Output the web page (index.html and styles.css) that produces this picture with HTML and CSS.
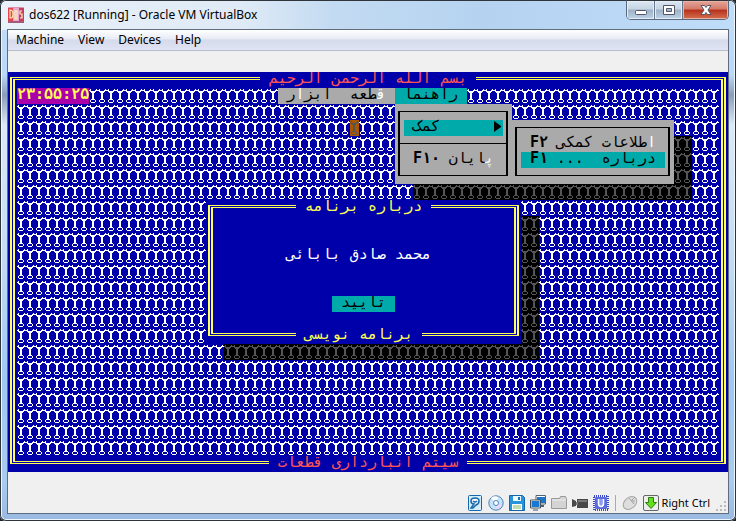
FILE: index.html
```html
<!DOCTYPE html>
<html lang="en">
<head>
<meta charset="utf-8">
<title>dos622 [Running] - Oracle VM VirtualBox</title>
<link rel="stylesheet" href="styles.css">
</head>
<body>
<svg class="defs" aria-hidden="true">
  <defs>
    <path id="glyph" d="M1 1h1v1h-1zM7 1h1v1h-1zM0 2h2v1h-2zM6 2h3v1h-3zM1 3h6v1h-6zM2 4h1v1h-1zM3 4h2v7h-2zM5 4h1v1h-1zM2 11h4v1h-4zM1 12h1v2h-1zM6 12h1v2h-1zM2 14h4v1h-4z"/>
    <pattern id="tile-white" width="9" height="16" patternUnits="userSpaceOnUse"><use href="#glyph" fill="#fff"/></pattern>
    <pattern id="tile-gray" width="9" height="16" patternUnits="userSpaceOnUse"><use href="#glyph" fill="#555"/></pattern>
  </defs>
</svg>
<div class="window">
  <header class="titlebar">
    <svg class="app-icon" width="16" height="16" viewBox="0 0 16 16" aria-hidden="true">
      <rect width="16" height="16" rx="1" fill="#d995ae"/><path d="M0 1h5v13H0z" fill="#e8434a"/><path d="M11 1h5v14h-5z" fill="#c83f60"/><path d="M5 1h6v14H5z" fill="#e7a8d0"/>
      <path d="M2 3v8h1q2 0 2-4T2 3zM7 4h2v8H7zM14 4h-2v3h2v4h-2" fill="none" stroke="#fff0b8" stroke-width="1.2"/><path d="M0 14h16v2H0z" fill="#a55a78"/>
    </svg>
    <h1 class="title">dos622 [Running] - Oracle VM VirtualBox</h1>
    <div class="controls">
      <button class="control" aria-label="Minimize"><svg width="14" height="14" viewBox="0 0 14 14"><rect x="1.500" y="7.500" width="11" height="4" rx="1" fill="#fff" stroke="#535666"/></svg></button>
      <button class="control" aria-label="Maximize"><svg width="14" height="14" viewBox="0 0 14 14"><path d="M1.500 2.500h11v9h-11zM4.500 5.500v3h5v-3z" fill="#fff" fill-rule="evenodd" stroke="#535666"/></svg></button>
      <button class="control close" aria-label="Close"><svg width="14" height="14" viewBox="0 0 14 14"><path d="M2 2.500h3.500L7 4.500l1.500-2H12L9 7l3 4.500H8.500L7 9.500l-1.500 2H2L5 7z" fill="#fff" stroke="#535666"/></svg></button>
    </div>
  </header>
  <div class="client">
    <nav class="app-menu">
      <button>Machine</button><button>View</button><button>Devices</button><button>Help</button>
    </nav>
    <main class="screen" lang="fa">
      <div class="frame main-frame"><div class="frame-inner"></div></div>
      <svg class="pattern desktop"><rect width="100%" height="100%" fill="url(#tile-white)"/></svg>
      <h2 class="caption top-caption">بسم الله الرحمن الرحیم</h2>
      <time class="clock">۲۳:۵۵:۲۵</time>
      <div class="cursor"><svg class="pattern"><rect width="100%" height="100%" fill="url(#tile-gray)"/></svg></div>
      <nav class="dos-menu">
        <button class="active">راهنما</button>
        <button><span class="hot">ق</span>طعه</button>
        <button>ابز<span class="hot">ا</span>ر</button>
      </nav>

      <div class="shadow menu-shadow"><svg class="pattern"><rect width="100%" height="100%" fill="url(#tile-gray)"/></svg></div>
      <div class="shadow submenu-shadow"><svg class="pattern"><rect width="100%" height="100%" fill="url(#tile-gray)"/></svg></div>
      <div class="shadow dialog-shadow"><svg class="pattern"><rect width="100%" height="100%" fill="url(#tile-gray)"/></svg></div>

      <div class="popup help-menu">
        <div class="popup-box"></div>
        <button class="entry selected"><span>کمک</span><svg width="9" height="16" viewBox="0 0 9 16"><path d="M0 1v11l7-5v-1z"/></svg></button>
        <hr class="divider">
        <button class="entry last"><span class="key">F۱۰</span><span><span class="hot">پ</span>ایان</span></button>
      </div>
      <div class="popup sub-menu">
        <div class="popup-box"></div>
        <button class="entry"><span class="key">F۲</span><span><span class="hot">ا</span>طلاعات کمکی</span></button>
        <button class="entry selected"><span class="key">F۱</span><span>درباره&nbsp; ...</span></button>
      </div>

      <section class="dialog" role="dialog" aria-labelledby="about-title">
        <div class="frame"><div class="frame-inner"></div></div>
        <h2 class="caption dialog-title" id="about-title">درباره برنامه</h2>
        <p class="author">محمد صادق بابائی</p>
        <button class="confirm">تایید</button>
        <p class="caption dialog-foot">برنامه نویسی</p>
      </section>
      <p class="caption bottom-caption">سیتم انبارداری قطعات</p>
    </main>
    <footer class="status">
      <svg viewBox="0 0 16 16"><rect x="1.500" y=".5" width="13" height="15" rx="1" fill="#d5edfc" stroke="#1768ab"/><path d="M4 6q0-3 4-3t4 3q0 3-3 4l-3 3H4l3-4Q4 9 4 6zM6 6q2 2 4 0" fill="#fff" stroke="#1768ab" stroke-width="1.500"/></svg>
      <svg viewBox="0 0 16 16"><circle cx="8" cy="8" r="7.200" fill="#c7e3f7" stroke="#4d84b5"/><path d="M8 8L3 3Q6 0 10 2z" fill="#fff"/><path d="M8 8l6 2q-2 4-6 4z" fill="#e7d9fa"/><circle cx="8" cy="8" r="2.500" fill="#fff" stroke="#4388c8"/></svg>
      <svg viewBox="0 0 16 16"><path d="M.5.5h13l2 2v13H.5z" fill="#2695dc" stroke="#1565a8"/><path d="M4 1h8v5H4z" fill="#eefaff"/><path d="M9 2h2v3H9z" fill="#1670b6"/><path d="M3 9h10v6H3z" fill="#fff"/><path d="M4 11h8M4 13h8" stroke="#84bd60"/></svg>
      <svg viewBox="0 0 16 16"><path d="M6.500 1.500h9v7h-9z" fill="#1c75c8" stroke="#fff"/><path d="M6 .5h9.500v8.500H6z" fill="none" stroke="#53616d"/><path d="M10 11h4" stroke="#53616d" stroke-width="2"/><path d="M1 5.500h9v7H1z" fill="#1978d0" stroke="#fff"/><path d="M.5 5h10v8H.5zM3 15h5" fill="none" stroke="#47545f"/></svg>
      <svg viewBox="0 0 16 16"><path d="M.5 13.500v-10h8l1-2h5l1 2v10z" fill="#d4d4d4" stroke="#999"/><path d="M1 5h14" stroke="#eee"/></svg>
      <svg viewBox="0 0 16 16"><path d="M5 4h11v9H5zM0 4l4 2v5l-4 1z" fill="#484848"/><path d="M6 6h9" stroke="#aaa"/><path d="M4 7h2v3H4z" fill="#777"/></svg>
      <svg viewBox="0 0 16 16"><rect x="1" y="1" width="14" height="14" fill="none" stroke="#3c49c4" stroke-width="2" stroke-dasharray="1 1"/><rect x="2" y="2" width="12" height="12" rx="1" fill="#5b6be0"/><path d="M5.500 4v4.500q0 3 2.500 3t2.500-3V4" fill="#8c9af2" stroke="#fff" stroke-width="1.500"/></svg>
      <span class="separator"></span>
      <svg viewBox="0 0 16 16"><ellipse cx="8" cy="8" rx="5.500" ry="7.500" transform="rotate(50 8 8)" fill="#dedede" stroke="#a5a5a5"/><path d="M7 3l5 6M9 6l4-4M10 6h3" fill="none" stroke="#a0a0a0"/></svg>
      <svg viewBox="0 0 16 16"><rect x=".5" y=".5" width="15" height="15" rx="1.500" fill="#eee" stroke="#666"/><path d="M5.500 2.500h5v5h3L8 13.500 2.500 7.500h3z" fill="#65dd20" stroke="#26810b"/></svg>
      <span class="host-key">Right Ctrl</span>
      <svg class="grip" viewBox="0 0 12 12"><path d="M8 0h2v2H8zM4 4h2v2H4zM8 4h2v2H8zM0 8h2v2H0zM4 8h2v2H4zM8 8h2v2H8z" fill="#bbb"/></svg>
    </footer>
  </div>
</div>
</body>
</html>
```
FILE: styles.css
```css
* { box-sizing: border-box; }
body { margin: 0; background: #20252c; font: 12px/16px "Noto Sans", "Open Sans", sans-serif; color: #000; }
h1, h2, p { margin: 0; font: inherit; }
button { margin: 0; padding: 0; border: 0; background: none; font: inherit; color: inherit; }
svg { display: block; flex: none; }
.defs { width: 0; height: 0; float: left; }

.window {
  display: flex;
  flex-direction: column;
  min-height: 100vh;
  padding: 0 8px 8px;
  border-radius: 6px;
  background: linear-gradient(#c3dcf6 0, #b9d9fa 75px, #8b9dba 95px, #dce9f6 125px, #c4ddf5 250px, #9fc8f0 380px, #a9ccef 480px, #9ab9e2 100%);
  box-shadow: inset 0 0 0 1px #30353c, inset 0 0 0 2px #edf6fe;
}
.titlebar {
  display: flex;
  align-items: flex-start;
  height: 29px;
  margin: 1px -6px 0;
  padding-left: 6px;
  background: linear-gradient(90deg, #e9f1f9 0, #dfeaf6 240px, #c3dbf2 330px, #b5d3f0 480px, #bfdcf9 100%);
  border-radius: 5px 5px 0 0;
}
.app-icon { margin-top: 6px; }
.title { flex: 1; padding: 6px 0 0 5px; }
.controls {
  display: flex;
  margin: -1px 5px 0 0;
  border: 1px solid #59687c;
  border-top-color: #30353c;
  border-radius: 0 0 5px 5px;
  overflow: hidden;
}
.control {
  display: grid;
  place-items: center;
  width: 28px;
  height: 18px;
  border-right: 1px solid #66778b;
  background: linear-gradient(#dce7f2, #c6d4e3 45%, #9eb1c6 50%, #bfd4e8);
  box-shadow: inset 0 0 0 1px #e4eef8;
}
.control.close {
  width: 45px;
  border: 0;
  background: linear-gradient(#e4a699, #d5796a 45%, #b7301c 50%, #d3704f);
  box-shadow: inset 0 0 0 1px #e9b0a4;
}
.client { flex: 1; display: flex; flex-direction: column; background: #f0f0f0; box-shadow: 0 0 0 1px #5f6d7c; }
.app-menu {
  display: flex;
  gap: 14px;
  height: 21px;
  margin-bottom: 21px;
  padding: 0 8px;
  background: linear-gradient(#fff, #e8ebf5 45%, #d5daec 50%, #dfe3f2);
  border-bottom: 1px solid #b8bccf;
}

/* Text mode surface: 80 columns by 25 rows */
.screen {
  display: grid;
  grid-template-columns: repeat(80, 1fr);
  grid-template-rows: repeat(25, 16px);
  background: #0000aa;
  font: 15px/12px "DejaVu Sans Mono", monospace;
  white-space: nowrap;
}
.pattern { width: 100%; height: 100%; shape-rendering: crispEdges; }
.desktop { grid-area: 2 / 2 / 25 / 80; }
.frame { margin: 5px 2px 8px; padding: 1px; border: solid #ffff55; border-width: 1px 2px; }
.frame-inner { height: 100%; border: solid #ffff55; border-width: 1px 2px; }
.main-frame { grid-area: 1 / 1 / -1 / -1; }
.caption { direction: rtl; text-align: center; background: #0000aa; color: #ffff55; }
.top-caption { grid-area: 1 / 29 / 2 / 53; color: #ff5555; }
.bottom-caption { grid-area: 25 / 30 / 26 / 52; color: #ff5555; }
.clock { grid-area: 2 / 2 / 3 / 10; direction: ltr; unicode-bidi: bidi-override; background: #aa00aa; color: #ffff55; font-weight: bold; }
.cursor { grid-area: 4 / 39 / 5 / 40; background: #aa5500; }
.dos-menu { grid-area: 2 / 31 / 3 / 52; display: flex; direction: rtl; background: #aaaaaa; }
.dos-menu button { padding: 0 9px 4px; }
.dos-menu .active { background: #00aaaa; }
.hot { color: #fff; }

.shadow { background: #000; }
.menu-shadow { grid-area: 8 / 46 / 9 / 59; }
.submenu-shadow { grid-area: 5 / 59 / 9 / 77; }
.dialog-shadow { grid-area: 10 / 25 / 19 / 60; }

.popup { display: grid; grid-auto-rows: 16px; background: #aaaaaa; }
.help-menu { grid-area: 3 / 44 / 8 / 57; }
.sub-menu { grid-area: 4 / 57 / 8 / 75; grid-template-rows: 16px 16px 16px 16px; }
.popup-box { grid-area: 1 / 1 / 5 / 2; margin: 7px 4px 8px 3px; border: solid #000; border-width: 1px 2px; }
.help-menu .popup-box { grid-row-end: 6; }
.entry { grid-area: 2 / 1; display: flex; justify-content: space-between; margin: 0 9px; padding: 0 9px; }
.entry > span { direction: rtl; }
.entry > .key { direction: ltr; unicode-bidi: bidi-override; font-weight: bold; font-family: "DejaVu Sans Mono", monospace; }
.entry.selected { background: #00aaaa; }
.sub-menu .entry.selected { grid-row: 3; }
.help-menu .selected { padding-right: 0; }
.entry.last { grid-row: 4; }
.divider { grid-area: 3 / 1; margin: 7px 4px 8px 3px; border: 0; background: #000; }

.dialog {
  grid-area: 9 / 23 / 18 / 58;
  display: grid;
  grid-template-columns: repeat(35, 1fr);
  grid-template-rows: repeat(9, 16px);
  background: #0000aa;
}
.dialog .frame { grid-area: 1 / 1 / -1 / -1; }
.dialog-title { grid-area: 1 / 11 / 2 / 26; }
.author { grid-area: 4 / 10 / 5 / 26; direction: rtl; color: #fff; }
.confirm { grid-area: 7 / 15 / 8 / 22; padding-bottom: 4px; direction: rtl; background: #00aaaa; }
.dialog-foot { grid-area: 9 / 11 / 10 / 25; }

.status { flex: 1; display: flex; align-items: center; justify-content: flex-end; gap: 5px; padding-top: 21px; }
.status svg { width: 16px; height: 16px; }
.separator { width: 1px; height: 16px; margin: 0 1px; background: #aaa; }
.host-key { margin-left: -2px; font-size: 11px; }
.status .grip { width: 12px; height: 12px; align-self: flex-end; margin-left: 1px; }
```
